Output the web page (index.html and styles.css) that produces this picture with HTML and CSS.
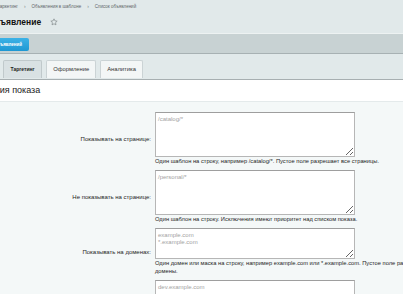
FILE: index.html
```html
<!DOCTYPE html>
<html lang="ru">
<head>
<meta charset="utf-8">
<title>Объявление</title>
<link rel="stylesheet" href="styles.css">
</head>
<body>
<div class="page">
  <nav class="crumbs">
    <span class="crumb">Маркетинг</span><span class="sep">›</span>
    <span class="crumb">Объявления в шаблоне</span><span class="sep">›</span>
    <span class="crumb">Список объявлений</span>
  </nav>
  <div class="title-row">
    <h1 class="title">Объявление</h1>
    <svg class="star" viewBox="0 0 24 24" width="8" height="8" aria-hidden="true"><path d="M12 2.5l2.9 6.1 6.6.8-4.9 4.6 1.3 6.6L12 17.3l-5.9 3.3 1.3-6.6-4.9-4.6 6.6-.8z" fill="none" stroke="#7d8587" stroke-width="2" stroke-linejoin="round"/></svg>
  </div>
  <div class="toolbar">
    <a class="btn">Список объявлений</a>
  </div>
  <div class="tabs">
    <div class="tab active">Таргетинг</div>
    <div class="tab">Оформление</div>
    <div class="tab">Аналитика</div>
  </div>
  <div class="section-head"><span class="section-title">Условия показа</span></div>
  <div class="form">
    <div class="label">Показывать на странице:</div>
    <div class="field">
      <textarea class="ta" placeholder="/catalog/*"></textarea>
      <div class="hint">Один шаблон на строку, например /catalog/*. Пустое поле разрешает все страницы.</div>
    </div>
    <div class="label">Не показывать на странице:</div>
    <div class="field">
      <textarea class="ta" placeholder="/personal/*"></textarea>
      <div class="hint">Один шаблон на строку. Исключения имеют приоритет над списком показа.</div>
    </div>
    <div class="label">Показывать на доменах:</div>
    <div class="field">
      <textarea class="ta short" placeholder="example.com&#10;*.example.com"></textarea>
      <div class="hint">Один домен или маска на строку, например example.com или *.example.com. Пустое поле разрешает все домены.</div>
    </div>
    <div class="label">Не показывать на доменах:</div>
    <div class="field">
      <textarea class="ta short" placeholder="dev.example.com"></textarea>
      <div class="hint">Один домен или маска на строку.</div>
    </div>
  </div>
</div>
</body>
</html>
```
FILE: styles.css
```css
html {
  overflow: hidden;
}
body {
  margin: 0;
  background: #e1e9ea;
  font-family: "Liberation Sans", Arial, sans-serif;
  color: #1e1e1e;
}
.page {
  width: 100%;
}
.crumbs {
  display: flex;
  align-items: center;
  height: 12px;
  margin-left: -4px;
  font-size: 4.5px;
  color: #5f6769;
  white-space: nowrap;
}
.sep {
  margin: 0 6px;
  font-size: 5px;
  color: #7d8587;
}
.title-row {
  display: flex;
  align-items: center;
  height: 20px;
  padding-bottom: 1px;
}
.title {
  margin: 0 0 0 -12px;
  font-size: 8.5px;
  font-weight: bold;
  color: #111;
}
.star {
  margin-left: 9px;
  display: block;
}
.toolbar {
  display: flex;
  align-items: flex-start;
  height: 19px;
  border-top: 1px solid #edf2f2;
  border-bottom: 1px solid #a7b1b3;
  background: #c8d2d3;
}
.btn {
  display: block;
  margin: 4px 0 0 -29px;
  height: 13px;
  line-height: 13px;
  padding: 0 7px 0 6px;
  border-radius: 2px;
  background: linear-gradient(#3cb2e6, #1e98d3);
  color: #fff;
  font-size: 4.5px;
  font-weight: bold;
  white-space: nowrap;
}
.tabs {
  display: flex;
  gap: 4px;
  padding: 6px 0 1px 3px;
  border-bottom: 1px solid #a7afb1;
}
.tab {
  height: 17px;
  line-height: 17px;
  padding: 0 6px;
  border: 1px solid #cbd3d5;
  border-bottom: none;
  border-radius: 2px 2px 0 0;
  background: #f3f6f6;
  font-size: 5.8px;
  color: #333;
  white-space: nowrap;
}
.tab.active {
  padding: 0 6.5px;
  background: #d9e1e3;
  border-color: #c0c9cb;
  font-weight: bold;
  font-size: 5px;
  color: #222;
}
.section-head {
  height: 21px;
  line-height: 21px;
  background: #fff;
  font-size: 9px;
  color: #222;
  white-space: nowrap;
}
.section-title {
  display: inline-block;
  margin-left: -25px;
}
.form {
  display: grid;
  grid-template-columns: 151px 295px;
  column-gap: 4px;
  row-gap: 4.5px;
  padding-top: 10px;
  border-top: 1px solid #e4eaeb;
  background: #f4f8f8;
}
.label {
  align-self: center;
  text-align: right;
  font-size: 6px;
  color: #1e1e1e;
  white-space: nowrap;
}
.field {
  display: flex;
  flex-direction: column;
}
.ta {
  display: block;
  box-sizing: border-box;
  width: 200px;
  height: 45px;
  margin: 0;
  padding: 3px 2px;
  border: 1px solid #b6b6b6;
  border-top-color: #9e9e9e;
  background: #fff;
  font-family: "Liberation Sans", Arial, sans-serif;
  font-size: 6px;
  line-height: 7px;
  resize: vertical;
}
.ta.short {
  height: 31px;
}
.ta::placeholder {
  color: #a3a3a3;
}
.hint {
  margin-top: 1px;
  font-size: 5.75px;
  line-height: 7.6px;
  color: #1e1e1e;
}
```
